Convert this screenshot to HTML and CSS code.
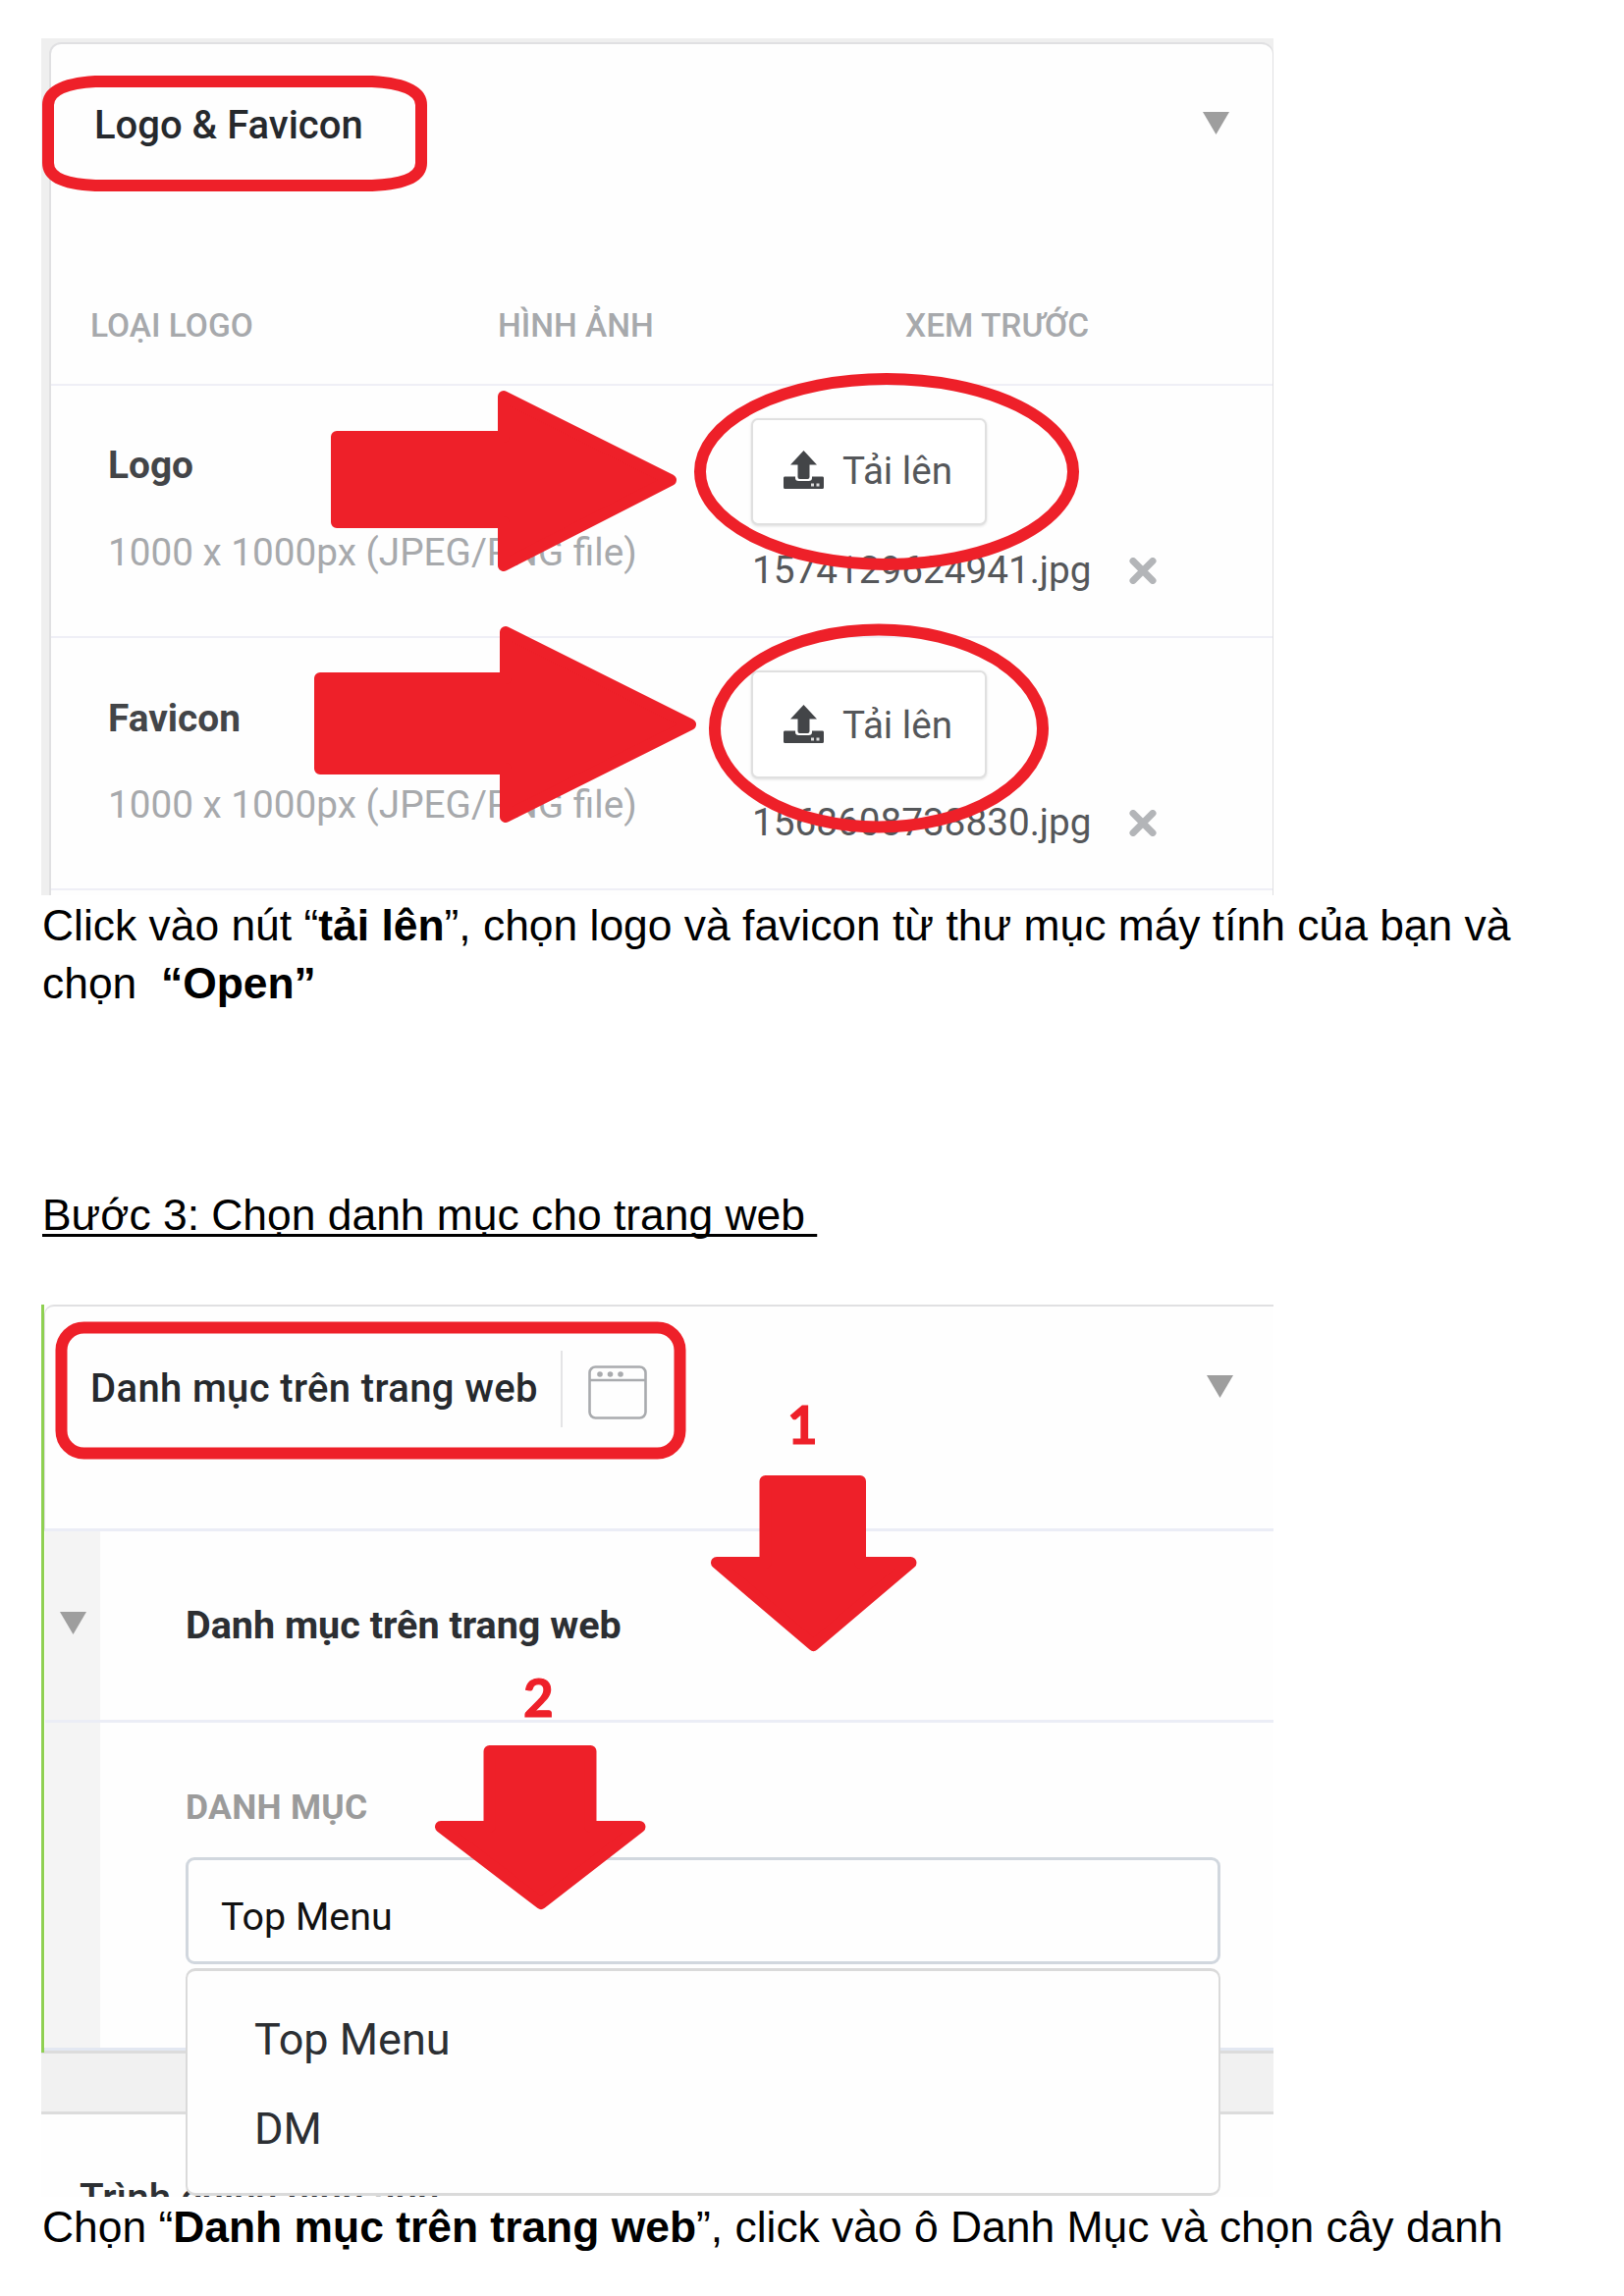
FILE: index.html
```html
<!DOCTYPE html>
<html lang="vi">
<head>
<meta charset="utf-8">
<title>Hướng dẫn cài đặt</title>
<link rel="stylesheet" href="styles.css">
</head>
<body>
<main class="page">
  <section class="figure logo-figure">
    <div class="card">
      <header class="card-head">
        <h2 class="title title-logo">Logo &amp; Favicon</h2>
        <svg class="caret" width="27" height="23" viewBox="0 0 27 23"><path d="M0 0H27L13.5 23Z"/></svg>
      </header>
      <div class="columns">
        <span class="col-logo">LOẠI LOGO</span><span class="col-image">HÌNH ẢNH</span><span class="col-preview">XEM TRƯỚC</span>
      </div>
      <div class="row">
        <div class="info"><strong class="name name-logo">Logo</strong><span class="size">1000 x 1000px (JPEG/PNG file)</span></div>
        <div class="upload">
          <div class="button"><svg class="up" width="41" height="39" viewBox="0 0 41 39"><path d="M20.5 0L34 14.500H26.500V27Q26.500 29 24.500 29H16.500Q14.500 29 14.500 27V14.500H7Z"/><path d="M1 26.500H12V28Q12 31 15.500 31H25.500Q29 31 29 28V26.500H40Q41 26.500 41 28V37.500Q41 39 39.500 39H1.500Q0 39 0 37.500V28Q0 26.500 1 26.500Z"/><path class="led" d="M28 33.500h3v3h-3zM33.500 33.500h3v3h-3z"/></svg><span class="button-text">Tải lên</span></div>
          <div class="file"><span class="file-name">1574129624941.jpg</span><svg class="cross" width="28" height="27" viewBox="0 0 28 27"><path d="M4 3.500L24 23.500M24 3.500L4 23.500"/></svg></div>
        </div>
      </div>
      <div class="row row-favicon">
        <div class="info"><strong class="name name-fav">Favicon</strong><span class="size">1000 x 1000px (JPEG/PNG file)</span></div>
        <div class="upload">
          <div class="button"><svg class="up" width="41" height="39" viewBox="0 0 41 39"><path d="M20.5 0L34 14.500H26.500V27Q26.500 29 24.500 29H16.500Q14.500 29 14.500 27V14.500H7Z"/><path d="M1 26.500H12V28Q12 31 15.500 31H25.500Q29 31 29 28V26.500H40Q41 26.500 41 28V37.500Q41 39 39.500 39H1.500Q0 39 0 37.500V28Q0 26.500 1 26.500Z"/><path class="led" d="M28 33.500h3v3h-3zM33.500 33.500h3v3h-3z"/></svg><span class="button-text">Tải lên</span></div>
          <div class="file"><span class="file-name">1568608738830.jpg</span><svg class="cross" width="28" height="27" viewBox="0 0 28 27"><path d="M4 3.500L24 23.500M24 3.500L4 23.500"/></svg></div>
        </div>
      </div>
    </div>
    <svg class="marks" width="1255" height="873" viewBox="42 39 1255 873">
      <path class="ring" d="M97 83H379Q429 86 429 107V166Q429 187 379 189H97Q49 187 49 166V107Q49 86 97 83Z"/>
      <ellipse class="ring" cx="903" cy="480.500" rx="190" ry="94.500"/>
      <ellipse class="ring" cx="895" cy="742" rx="167" ry="100.500"/>
      <path class="arrow" d="M343 445H513V404L683 489L513 576V532H343Z"/>
      <path class="arrow" d="M326 691H515V644L703 738L515 832V783H326Z"/>
    </svg>
  </section>

  <p class="para">Click vào nút “<b>tải lên</b>”, chọn logo và favicon từ thư mục máy tính của bạn và<br>chọn&nbsp; <b>“Open”</b></p>
  <p class="step"><u>Bước 3: Chọn danh mục cho trang web&nbsp;</u></p>

  <section class="figure menu-figure">
    <header class="menu-head">
      <h2 class="title title-menu">Danh mục trên trang web</h2>
      <svg class="window" width="60" height="55" viewBox="0 0 60 55"><rect x="1.500" y="1.500" width="57" height="52" rx="6"/><path d="M2 15H58"/><g><circle cx="12" cy="9" r="2.800"/><circle cx="22.500" cy="9" r="2.800"/><circle cx="33" cy="9" r="2.800"/></g></svg>
      <svg class="caret" width="27" height="23" viewBox="0 0 27 23"><path d="M0 0H27L13.5 23Z"/></svg>
    </header>
    <div class="menu-body">
      <aside class="rail"><svg class="caret" width="27" height="23" viewBox="0 0 27 23"><path d="M0 0H27L13.5 23Z"/></svg></aside>
      <div class="content">
        <h3 class="subtitle"><span>Danh mục trên trang web</span></h3>
        <label class="label"><span>DANH MỤC</span></label>
        <div class="input"><span>Top Menu</span></div>
      </div>
    </div>
    <div class="gap"></div>
    <div class="next"><span>Trình chiếu hình ảnh</span></div>
    <div class="dropdown">
      <div class="option option-top"><span>Top Menu</span></div>
      <div class="option option-dm"><span>DM</span></div>
    </div>
    <svg class="marks" width="1255" height="909" viewBox="42 1329 1255 909">
      <rect class="ring" x="62.500" y="1352.500" width="630" height="128" rx="23"/>
      <path class="arrow" d="M779.500 1509H876V1592H927.500L828.500 1676L730 1592H779.500Z"/>
      <path class="arrow" d="M498.500 1784H601.500V1861H651.500L551 1939L449 1861H498.500Z"/>
    </svg>
    <span class="number number-one">1</span>
    <span class="number number-two">2</span>
  </section>
  <p class="para">Chọn “<b>Danh mục trên trang web</b>”, click vào ô Danh Mục và chọn cây danh</p>
</main>
</body>
</html>
```
FILE: styles.css
```css
* { box-sizing: border-box; }
body { margin: 0; background: #fff; color: #000; font-family: "Liberation Sans", Arial, sans-serif; }
h2, h3, p { margin: 0; font-weight: 500; }
svg { display: block; flex: none; }
.page { width: 1654px; height: 2339px; padding: 39px 42px 0; overflow: hidden; }
.figure { position: relative; width: 1255px; overflow: hidden; font-family: Roboto, sans-serif; white-space: nowrap; }
.logo-figure { height: 873px; padding: 4px 0 0 8px; background: #efefef; }
.card { height: 880px; background: #fefefe; border: 2px solid #e0e0e2; border-right-width: 1px; border-radius: 12px 12px 0 0; }
.card-head { display: flex; justify-content: space-between; height: 209px; padding: 58px 44px 0 44px; }
.title { font-size: 40px; line-height: 50px; color: #26292d; }
.card-head .caret { margin-top: 11px; }
.caret { fill: #9e9e9e; }
.columns { display: flex; height: 139px; padding: 58px 0 0 40px; border-bottom: 2px solid #efeff6; font-size: 33.500px; line-height: 40px; font-weight: 500; color: #a7a9ac; }
.col-logo { width: 415px; }
.col-image { width: 415px; }
.row { display: flex; height: 257px; padding-left: 58px; border-bottom: 2px solid #efeff6; }
.info { width: 655px; display: flex; flex-direction: column; padding-top: 56px; }
.name { font-size: 38.800px; line-height: 50px; font-weight: 700; color: #434548; }
.row-favicon .info { padding-top: 57px; }
.size { margin-top: 39px; font-size: 38.700px; line-height: 50px; color: #a7a9ac; }
.row-favicon .size { margin-top: 38px; }
.upload { padding-top: 33px; }
.button { display: flex; width: 240px; height: 109px; padding: 31px 0 0 31px; border: 2px solid #e0e0e0; border-radius: 7px; background: #fff; box-shadow: 0 1px 3px #0002; }
.row-favicon .button { padding-top: 33px; height: 110px; }
.row-favicon .file { margin-top: 20px; }
.up { fill: #434548; }
.up .led { fill: #ddd; }
.button-text { margin: -4px 0 0 19px; font-size: 38.600px; line-height: 50px; color: #55575a; }
.file { display: flex; margin-top: 21px; padding-left: 1px; font-size: 38.700px; line-height: 50px; color: #55575a; }
.file-name { width: 384px; }
.cross { margin-top: 12px; fill: none; stroke: #b3b5b8; stroke-width: 7; stroke-linecap: round; }
.marks { position: absolute; left: 0; top: 0; }
.ring { fill: none; stroke: #ee2029; stroke-width: 12; }
.arrow { fill: #ee2029; stroke: #ee2029; stroke-width: 12; stroke-linejoin: round; }
.para, .step { padding-left: 1px; font-size: 44.400px; line-height: 58.500px; white-space: nowrap; }
.para { padding-top: 2px; }
.step { margin-top: 178px; margin-left: 0; height: 120px; }
.step u { text-decoration-thickness: 3px; text-underline-offset: 4px; text-decoration-skip-ink: none; }

.menu-figure { height: 909px; margin-top: 0; background: #fefefe; }
.menu-figure::before { content: ""; position: absolute; left: 0; top: 0; width: 3px; height: 762px; background: #8fd052; }
.menu-head { display: flex; height: 231px; margin-left: 3px; padding: 60px 41px 0 46px; border: solid #e0e0e2; border-width: 2px 0 0 1px; border-bottom: 3px solid #ebedf6; border-top-left-radius: 10px; }
.title-menu { width: 481px; height: 78px; margin-top: -15px; padding-top: 14px; border-right: 2px solid #e4e4e6; letter-spacing: 0.360px; }
.window { margin-left: 26px; fill: none; stroke: #a9abae; stroke-width: 2.600; }
.window g { fill: #a9abae; stroke: none; }
.menu-head .caret { margin: 10px 0 0 auto; }
.menu-body { display: flex; height: 526px; margin-left: 4px; }
.rail { width: 56px; padding: 82px 0 0 15px; background: linear-gradient(#ebedf6, #ebedf6) 0 192px / 100% 3px no-repeat #f4f4f4; }
.content { flex: 1; }
.subtitle { height: 195px; padding: 71px 0 0 87px; border-bottom: 3px solid #ebedf6; font-size: 39.500px; line-height: 50px; font-weight: 700; color: #2c2f33; }
.label { display: block; height: 137px; padding: 66px 0 0 87px; font-size: 35.500px; letter-spacing: 0.300px; line-height: 40px; font-weight: 700; color: #9b9b9b; }
.input { width: 1054px; height: 109px; margin-left: 87px; padding: 33px 0 0 33px; border: 3px solid #d1d7de; border-radius: 9px; font-size: 39.400px; line-height: 50px; color: #111; }
.gap { height: 68px; background: #f1f1f1; border-top: 3px solid #e3e8f2; border-bottom: 3px solid #dcdcdc; box-shadow: inset 0 3px #dcdcdc; }
.next { height: 100px; padding: 60px 0 0 39px; font-size: 40.500px; line-height: 50px; font-weight: 500; color: #2c2f33; }
.dropdown { position: absolute; left: 147px; top: 676px; width: 1054px; height: 232px; padding: 45px 0 0 68px; background: #fefefe; border: 3px solid #dadada; border-width: 3px 2px; border-radius: 10px; font-size: 45px; line-height: 50px; color: #2c2f33; }
.option { height: 91px; }
.number { position: absolute; font: 700 53px/60px Lato, sans-serif; color: #ee2029; -webkit-text-stroke: 1.200px #ee2029; }
.number-one { left: 760px; top: 92px; }
.number-two { left: 491px; top: 370px; }
```
